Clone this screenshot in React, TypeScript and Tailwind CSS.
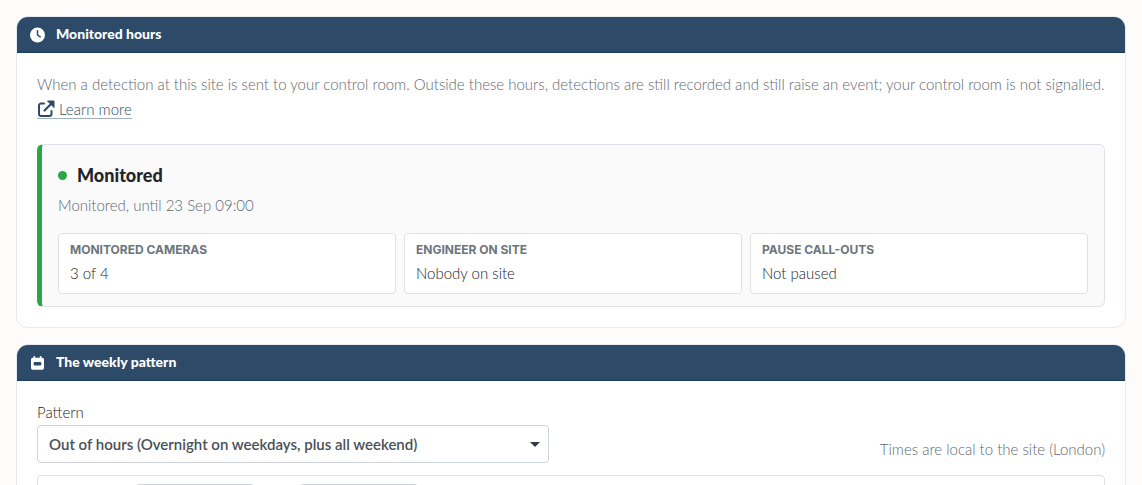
import { useState, type ReactNode } from "react";

interface PanelProps {
  icon: ReactNode;
  title: string;
  children: ReactNode;
}

const FACTS = [
  { label: "Monitored cameras", value: "3 of 4" },
  { label: "Engineer on site", value: "Nobody on site" },
  { label: "Pause call-outs", value: "Not paused" },
];

const PATTERNS = [
  { value: "out-of-hours", label: "Out of hours (Overnight on weekdays, plus all weekend)" },
];

function ClockIcon() {
  return (
    <svg viewBox="0 0 16 16" className="size-4" fill="none" aria-hidden="true">
      <circle cx="7.5" cy="8" r="7.5" fill="#fff" />
      <path d="M7.500 3.800V8l2.700 1.900" stroke="#2d4b68" strokeWidth="1.5" strokeLinecap="round" strokeLinejoin="round" />
    </svg>
  );
}

function CalendarIcon() {
  return (
    <svg viewBox="0 0 16 16" className="size-4" aria-hidden="true">
      <path
        fill="#fff"
        fillRule="evenodd"
        d="M4.300 .9a.9.9 0 0 1 .9.9V2.800h4.600V1.800a.9.9 0 0 1 1.800 0V2.800h.7A1.700 1.700 0 0 1 14 4.500v8.500a1.700 1.700 0 0 1-1.700 1.700H2.700A1.700 1.700 0 0 1 1 13V4.500A1.700 1.700 0 0 1 2.700 2.800h.7V1.800a.9.9 0 0 1 .9-.9ZM4.500 7a.8.8 0 0 0-.8.8v1.900a.8.8 0 0 0 .8.8h6a.8.8 0 0 0 .8-.8V7.800a.8.8 0 0 0-.8-.8Z"
      />
    </svg>
  );
}

function ExternalIcon() {
  return (
    <svg viewBox="0 0 18 18" className="size-[18px]" fill="none" aria-hidden="true">
      <path d="M7 3.500H4A2 2 0 0 0 2 5.500V14a2 2 0 0 0 2 2h8.500a2 2 0 0 0 2-2v-3" stroke="currentColor" strokeWidth="2" strokeLinecap="round" />
      <path d="M7.500 10.500 14 4" stroke="currentColor" strokeWidth="2.200" strokeLinecap="round" />
      <path d="M10.500 1H17v6.500Z" fill="currentColor" stroke="currentColor" strokeLinejoin="round" />
    </svg>
  );
}

function Panel({ icon, title, children }: PanelProps) {
  return (
    <section className="overflow-hidden rounded-xl border border-[#e4eaed] bg-white">
      <header className="flex h-9 items-center gap-[10px] border-b border-[#1f3d5c] bg-[#2d4b68] px-[13px] text-white">
        {icon}
        <h2 className="pb-px text-sm font-black">{title}</h2>
      </header>
      <div className="px-5 pt-[19px] pb-5">{children}</div>
    </section>
  );
}

export default function App() {
  const [pattern, setPattern] = useState(PATTERNS[0].value);

  return (
    <main className="flex h-screen flex-col gap-4 overflow-hidden bg-[#fdfcfb] p-4 font-['Lato',sans-serif] text-[15px] leading-6 font-light text-[#212529] *:shrink-0">
      <Panel icon={<ClockIcon />} title="Monitored hours">
        <p className="text-[#5f6871]">
          When a detection at this site is sent to your control room. Outside these hours, detections are still
          recorded and still raise an event; your control room is not signalled.
        </p>
        <a
          href="#learn-more"
          className="mt-[5px] inline-flex h-[18px] items-center gap-1 border-b border-[#a0afbd] pb-px text-[#2d4b68]"
        >
          <ExternalIcon />
          Learn more
        </a>

        <div className="mt-5 rounded-md border border-l-[5px] border-[#dee2e6] border-l-[#28a745] bg-[#fafafa] px-4 pt-4 pb-3">
          <div className="flex h-7 items-center gap-[10px]">
            <span className="size-[9px] rounded-full bg-[#28a745]" />
            <h3 className="text-lg font-black">Monitored</h3>
          </div>
          <p className="mt-1 text-[#5f6871]">Monitored, until 23 Sep 09:00</p>
          <dl className="mt-4 grid grid-cols-3 gap-2">
            {FACTS.map((fact) => (
              <div key={fact.label} className="rounded border border-[#dee2e6] bg-white px-[11px] py-2">
                <dt className="font-['Inter',sans-serif] text-xs leading-4 font-bold text-[#6c757d] uppercase">
                  {fact.label}
                </dt>
                <dd className="mt-[3px]">{fact.value}</dd>
              </div>
            ))}
          </dl>
        </div>
      </Panel>

      <Panel icon={<CalendarIcon />} title="The weekly pattern">
        <div className="flex items-end justify-between gap-4">
          <div className="w-[512px]">
            <label htmlFor="pattern" className="block pb-px">
              Pattern
            </label>
            <div className="grid items-center">
              <select
                id="pattern"
                value={pattern}
                onChange={(e) => setPattern(e.target.value)}
                className="col-start-1 row-start-1 h-[38px] w-full appearance-none rounded border border-[#ced4da] bg-white pr-8 pl-[11px] font-semibold text-[#495057]"
              >
                {PATTERNS.map((p) => (
                  <option key={p.value} value={p.value}>
                    {p.label}
                  </option>
                ))}
              </select>
              <svg viewBox="0 0 10 5" className="pointer-events-none col-start-1 row-start-1 mr-[9px] h-[5px] w-[10px] justify-self-end" aria-hidden="true">
                <path d="M0 0h10L5 5Z" fill="#343a40" />
              </svg>
            </div>
          </div>
          <p className="pb-[2px] text-[#5f6871]">Times are local to the site (London)</p>
        </div>

        <div className="mt-3 flex gap-11 rounded border border-[#dee2e6] py-2 pl-[97px]">
          <input type="text" aria-label="Start" className="h-8 w-[120px] rounded border border-[#ced4da] px-2" />
          <input type="text" aria-label="End" className="h-8 w-[120px] rounded border border-[#ced4da] px-2" />
        </div>
      </Panel>
    </main>
  );
}
